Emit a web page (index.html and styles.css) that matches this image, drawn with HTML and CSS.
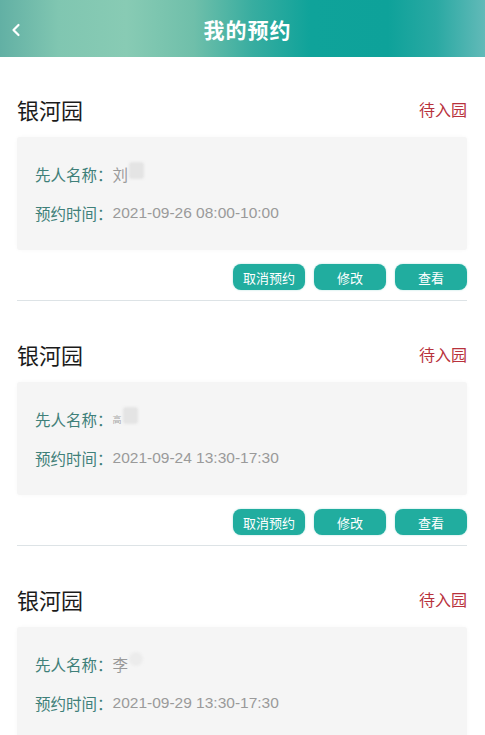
FILE: index.html
```html
<!DOCTYPE html>
<html lang="zh-CN">
<head>
<meta charset="utf-8">
<title>我的预约</title>
<link rel="stylesheet" href="styles.css">
</head>
<body>
<header class="topbar">
  <span class="back">
    <svg width="10" height="14" viewBox="0 0 10 14"><polyline points="7.5,2 2.5,7 7.5,12" fill="none" stroke="#fff" stroke-width="2.2" stroke-linecap="round" stroke-linejoin="round"/></svg>
  </span>
  <h1 class="title">我的预约</h1>
</header>
<main class="list">
  <section class="item">
    <div class="item-head"><span class="place">银河园</span><span class="status">待入园</span></div>
    <div class="card">
      <div class="row"><span class="label">先人名称：</span><span class="value">刘</span><span class="blur"></span></div>
      <div class="row"><span class="label">预约时间：</span><span class="value">2021-09-26 08:00-10:00</span></div>
    </div>
    <div class="actions"><button class="btn">取消预约</button><button class="btn">修改</button><button class="btn">查看</button></div>
  </section>
  <section class="item">
    <div class="item-head"><span class="place">银河园</span><span class="status">待入园</span></div>
    <div class="card">
      <div class="row"><span class="label">先人名称：</span><span class="value tiny">高</span><span class="blur"></span></div>
      <div class="row"><span class="label">预约时间：</span><span class="value">2021-09-24 13:30-17:30</span></div>
    </div>
    <div class="actions"><button class="btn">取消预约</button><button class="btn">修改</button><button class="btn">查看</button></div>
  </section>
  <section class="item">
    <div class="item-head"><span class="place">银河园</span><span class="status">待入园</span></div>
    <div class="card">
      <div class="row"><span class="label">先人名称：</span><span class="value">李</span><span class="blur round"></span></div>
      <div class="row"><span class="label">预约时间：</span><span class="value">2021-09-29 13:30-17:30</span></div>
    </div>
  </section>
</main>
</body>
</html>
```

FILE: styles.css
```css
* { box-sizing: border-box; }
html, body { margin: 0; padding: 0; background: #fff; }
body {
  font-family: "Liberation Sans", "Noto Sans CJK SC", sans-serif;
  color: #222;
  overflow: hidden;
}
.topbar {
  height: 57px;
  display: flex;
  align-items: center;
  justify-content: center;
  position: relative;
  background: linear-gradient(90deg, #62b0a4 0%, #80c6b1 12%, #88cbb4 26%, #6fbfaa 40%, #38ada0 52%, #0fa39a 64%, #0ea29a 80%, #2aa9a3 90%, #62bab8 100%);
}
.back {
  position: absolute;
  left: 11px;
  top: 23px;
  display: flex;
}
.title {
  margin: 0;
  padding-left: 10px;
  font-size: 21px;
  font-weight: bold;
  color: #fff;
  letter-spacing: 1px;
}
.list { padding: 0 18px 0 17px; }
.item { padding-top: 37px; }
.item:first-child { padding-top: 36px; }
.item-head {
  height: 32px;
  display: flex;
  align-items: center;
  justify-content: space-between;
}
.place { font-size: 22px; color: #1b1b1b; }
.status { font-size: 16px; color: #b8323c; }
.card {
  margin-top: 12px;
  height: 113px;
  background: #f5f5f5;
  border-radius: 3px;
  box-shadow: 0 0 4px rgba(0,0,0,0.03);
  padding: 25px 18px 0;
  display: flex;
  flex-direction: column;
  gap: 15px;
}
.row {
  height: 24px;
  display: flex;
  align-items: center;
  font-size: 15.5px;
}
.label { color: #3f8079; }
.value { color: #9a9a9a; }
.value.tiny { font-size: 9px; color: #aaa; }
.blur {
  width: 15px;
  height: 17px;
  margin-left: 1px;
  margin-top: -8px;
  background: #e4e4e4;
  border-radius: 3px;
  filter: blur(1px);
}
.blur.round { border-radius: 50%; width: 14px; height: 14px; margin-top: -10px; background: #ececec; }
.actions {
  margin-top: 14px;
  display: flex;
  justify-content: flex-end;
  gap: 9px;
  padding-bottom: 10px;
  border-bottom: 1px solid #dde3e6;
}
.btn {
  width: 72px;
  height: 26px;
  border: none;
  border-radius: 8px;
  background: #21ad9f;
  color: #fff;
  font-family: "Liberation Sans", "Noto Sans CJK SC", sans-serif;
  font-size: 13px;
  padding: 0;
  box-shadow: 0 0 2px rgba(33,173,159,0.4);
}
```
